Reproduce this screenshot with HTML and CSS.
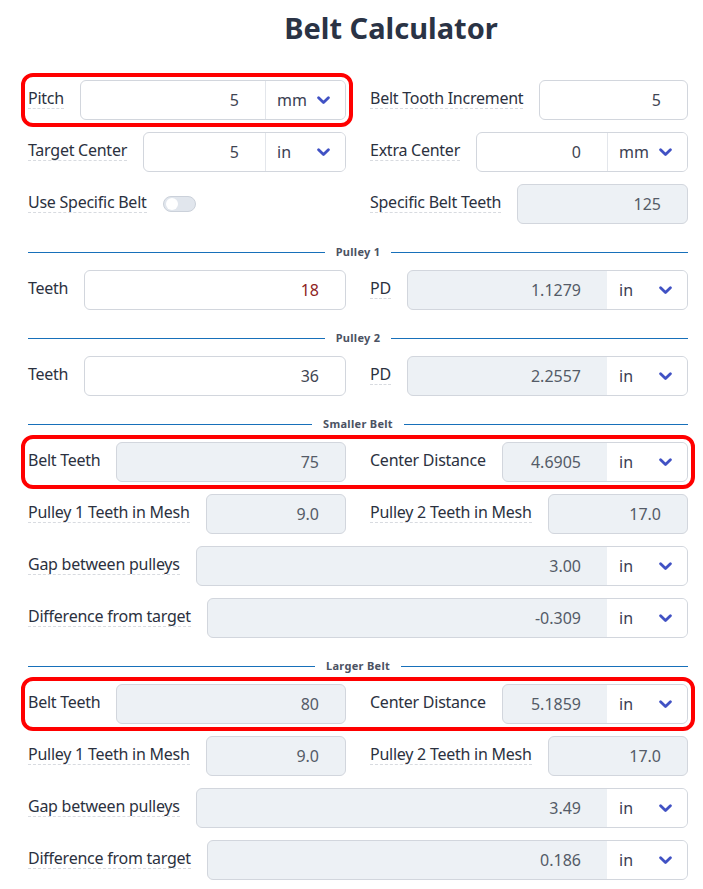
FILE: index.html
```html
<!DOCTYPE html>
<html lang="en">
<head>
<meta charset="utf-8">
<title>Belt Calculator</title>
<link rel="stylesheet" href="styles.css">
</head>
<body>
<div class="page">
  <h1 class="title">Belt Calculator</h1>
  <div class="form">
    <div class="row">
      <div class="field hl">
        <span class="label">Pitch</span>
        <div class="input"><span class="num">5</span><span class="sel"><span>mm</span><svg class="chev" viewBox="0 0 13 9" width="13" height="9"><path d="M1.6 1.8 L6.5 6.6 L11.4 1.8"/></svg></span></div>
      </div>
      <div class="field">
        <span class="label">Belt Tooth Increment</span>
        <div class="input"><span class="num">5</span></div>
      </div>
    </div>
    <div class="row">
      <div class="field">
        <span class="label">Target Center</span>
        <div class="input"><span class="num">5</span><span class="sel"><span>in</span><svg class="chev" viewBox="0 0 13 9" width="13" height="9"><path d="M1.6 1.8 L6.5 6.6 L11.4 1.8"/></svg></span></div>
      </div>
      <div class="field">
        <span class="label">Extra Center</span>
        <div class="input"><span class="num">0</span><span class="sel"><span>mm</span><svg class="chev" viewBox="0 0 13 9" width="13" height="9"><path d="M1.6 1.8 L6.5 6.6 L11.4 1.8"/></svg></span></div>
      </div>
    </div>
    <div class="row">
      <div class="field">
        <span class="label">Use Specific Belt</span>
        <span class="toggle"><span class="knob"></span></span>
      </div>
      <div class="field">
        <span class="label">Specific Belt Teeth</span>
        <div class="input ro"><span class="num">125</span></div>
      </div>
    </div>

    <div class="divider"><span>Pulley 1</span></div>
    <div class="row">
      <div class="field">
        <span class="label plain">Teeth</span>
        <div class="input"><span class="num bad">18</span></div>
      </div>
      <div class="field">
        <span class="label">PD</span>
        <div class="input ro"><span class="num">1.1279</span><span class="sel"><span>in</span><svg class="chev" viewBox="0 0 13 9" width="13" height="9"><path d="M1.6 1.8 L6.5 6.6 L11.4 1.8"/></svg></span></div>
      </div>
    </div>

    <div class="divider"><span>Pulley 2</span></div>
    <div class="row">
      <div class="field">
        <span class="label plain">Teeth</span>
        <div class="input"><span class="num">36</span></div>
      </div>
      <div class="field">
        <span class="label">PD</span>
        <div class="input ro"><span class="num">2.2557</span><span class="sel"><span>in</span><svg class="chev" viewBox="0 0 13 9" width="13" height="9"><path d="M1.6 1.8 L6.5 6.6 L11.4 1.8"/></svg></span></div>
      </div>
    </div>

    <div class="divider"><span>Smaller Belt</span></div>
    <div class="row hl">
      <div class="field">
        <span class="label plain">Belt Teeth</span>
        <div class="input ro"><span class="num">75</span></div>
      </div>
      <div class="field">
        <span class="label plain">Center Distance</span>
        <div class="input ro"><span class="num">4.6905</span><span class="sel"><span>in</span><svg class="chev" viewBox="0 0 13 9" width="13" height="9"><path d="M1.6 1.8 L6.5 6.6 L11.4 1.8"/></svg></span></div>
      </div>
    </div>
    <div class="row">
      <div class="field">
        <span class="label">Pulley 1 Teeth in Mesh</span>
        <div class="input ro"><span class="num">9.0</span></div>
      </div>
      <div class="field">
        <span class="label">Pulley 2 Teeth in Mesh</span>
        <div class="input ro"><span class="num">17.0</span></div>
      </div>
    </div>
    <div class="row full">
      <div class="field">
        <span class="label">Gap between pulleys</span>
        <div class="input ro"><span class="num">3.00</span><span class="sel"><span>in</span><svg class="chev" viewBox="0 0 13 9" width="13" height="9"><path d="M1.6 1.8 L6.5 6.6 L11.4 1.8"/></svg></span></div>
      </div>
    </div>
    <div class="row full">
      <div class="field">
        <span class="label">Difference from target</span>
        <div class="input ro"><span class="num">-0.309</span><span class="sel"><span>in</span><svg class="chev" viewBox="0 0 13 9" width="13" height="9"><path d="M1.6 1.8 L6.5 6.6 L11.4 1.8"/></svg></span></div>
      </div>
    </div>

    <div class="divider"><span>Larger Belt</span></div>
    <div class="row hl">
      <div class="field">
        <span class="label plain">Belt Teeth</span>
        <div class="input ro"><span class="num">80</span></div>
      </div>
      <div class="field">
        <span class="label plain">Center Distance</span>
        <div class="input ro"><span class="num">5.1859</span><span class="sel"><span>in</span><svg class="chev" viewBox="0 0 13 9" width="13" height="9"><path d="M1.6 1.8 L6.5 6.6 L11.4 1.8"/></svg></span></div>
      </div>
    </div>
    <div class="row">
      <div class="field">
        <span class="label">Pulley 1 Teeth in Mesh</span>
        <div class="input ro"><span class="num">9.0</span></div>
      </div>
      <div class="field">
        <span class="label">Pulley 2 Teeth in Mesh</span>
        <div class="input ro"><span class="num">17.0</span></div>
      </div>
    </div>
    <div class="row full">
      <div class="field">
        <span class="label">Gap between pulleys</span>
        <div class="input ro"><span class="num">3.49</span><span class="sel"><span>in</span><svg class="chev" viewBox="0 0 13 9" width="13" height="9"><path d="M1.6 1.8 L6.5 6.6 L11.4 1.8"/></svg></span></div>
      </div>
    </div>
    <div class="row full">
      <div class="field">
        <span class="label">Difference from target</span>
        <div class="input ro"><span class="num">0.186</span><span class="sel"><span>in</span><svg class="chev" viewBox="0 0 13 9" width="13" height="9"><path d="M1.6 1.8 L6.5 6.6 L11.4 1.8"/></svg></span></div>
      </div>
    </div>
  </div>
</div>
</body>
</html>
```

FILE: styles.css
```css
html, body {
  margin: 0;
  padding: 0;
  background: #ffffff;
}

body {
  font-family: "Noto Sans", "Open Sans", sans-serif;
  color: #2b3140;
}

.page {
  padding: 10px 15px 0 28px;
}

.title {
  margin: 0 0 34px 0;
  padding-left: 66px;
  text-align: center;
  font-size: 29px;
  line-height: 36px;
  font-weight: 700;
  color: #2a3345;
}

.form {
  display: flex;
  flex-direction: column;
  gap: 12px;
}

.row {
  display: grid;
  grid-template-columns: 1fr 1fr;
  column-gap: 24px;
}

.row.full {
  grid-template-columns: 1fr;
}

.field {
  display: flex;
  align-items: center;
  gap: 16px;
  height: 40px;
  min-width: 0;
}

.hl {
  outline: 4px solid #ff0000;
  outline-offset: 3px;
  border-radius: 5px;
}

.label {
  align-self: flex-start;
  margin-top: 8px;
  white-space: nowrap;
  font-size: 16px;
  line-height: 20px;
  letter-spacing: -0.25px;
  border-bottom: 1px dashed #d8dbe0;
}

.label.plain {
  border-bottom-color: transparent;
}

.input {
  flex: 1;
  min-width: 0;
  display: flex;
  height: 40px;
  box-sizing: border-box;
  border: 1px solid #d2d6dd;
  border-radius: 6px;
  overflow: hidden;
  background: #ffffff;
}

.input.ro {
  background: #edf1f5;
}

.num {
  flex: 1;
  min-width: 0;
  text-align: right;
  padding-right: 26px;
  font-size: 16px;
  line-height: 38px;
  color: #3f4552;
}

.input.ro .num {
  color: #545b67;
}

.num.bad {
  color: #8e2424;
}

.sel {
  width: 80px;
  box-sizing: border-box;
  display: flex;
  align-items: center;
  justify-content: space-between;
  padding: 0 15px 0 11px;
  border-left: 1px solid #e3e6eb;
  background: #ffffff;
  font-size: 16px;
  line-height: 38px;
  color: #3b4052;
}

.input.ro .sel {
  border-left-color: #ffffff;
}

.chev {
  display: block;
  fill: none;
  stroke: #4152c4;
  stroke-width: 2.8;
  stroke-linecap: round;
  stroke-linejoin: round;
}

.toggle {
  display: flex;
  align-items: center;
  width: 33px;
  height: 16px;
  box-sizing: border-box;
  padding: 0 2px;
  border: 1px solid #cbd1da;
  border-radius: 8px;
  background: #e1e6ed;
}

.knob {
  width: 12px;
  height: 12px;
  border-radius: 50%;
  background: #ffffff;
}

.divider {
  display: flex;
  align-items: center;
  gap: 11px;
  height: 14px;
  margin: 9px 0 -1px 0;
}

.divider::before,
.divider::after {
  content: "";
  flex: 1;
  height: 1px;
  background: #1770ba;
}

.divider span {
  font-size: 11px;
  line-height: 14px;
  font-weight: 700;
  letter-spacing: 0.3px;
  color: #4b5262;
}
```
